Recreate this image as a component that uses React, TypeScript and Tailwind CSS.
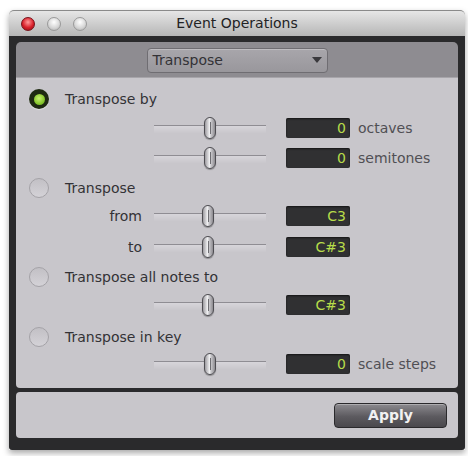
import React from "react";

const font = { fontFamily: '"DejaVu Sans", "Liberation Sans", sans-serif' };

function Radio({ on }: { on?: boolean }) {
  if (on) {
    return (
      <div className="w-[20px] h-[20px] rounded-full bg-[#1f2a12] flex items-center justify-center shadow-[0_1px_1px_rgba(255,255,255,0.5)]">
        <div className="w-[11px] h-[11px] rounded-full bg-[radial-gradient(circle_at_45%_40%,#c8f070,#86c72c_60%,#5c9a1a)]" />
      </div>
    );
  }
  return (
    <div className="w-[20px] h-[20px] rounded-full border border-[#a4a2a7] bg-[linear-gradient(#c2c0c5,#d4d2d7)]" />
  );
}

function Slider({ pos = 50 }: { pos?: number }) {
  return (
    <div className="relative w-[112px] h-[20px]">
      <div className="absolute left-0 right-0 top-[7px] h-[1px] bg-[#8f8d93]" />
      <div className="absolute left-0 right-0 top-[8px] h-[8px] bg-[linear-gradient(#d7d5da,#c7c5ca)]" />
      <div
        className="absolute top-[-1px] w-[12px] h-[22px] rounded-[6px] border border-[#4e4d52] bg-[linear-gradient(90deg,#9e9ca1,#efeff1_45%,#c9c8cc_60%,#8d8b90)] flex justify-center shadow-[0_1px_1px_rgba(0,0,0,0.3)]"
        style={{ left: pos }}
      >
        <div className="mt-[4px] w-[1px] h-[12px] bg-[#6e6d72]" />
      </div>
    </div>
  );
}

function Field({ value }: { value: string }) {
  return (
    <div className="w-[64px] h-[20px] rounded-[2px] bg-[#303032] shadow-[inset_0_1px_2px_rgba(0,0,0,0.6)] text-right pr-[4px] text-[14px] leading-[20px] text-[#b7dc4a]">
      {value}
    </div>
  );
}

function SliderRow({
  label,
  value,
  unit,
  pos,
  mt,
}: {
  label?: string;
  value: string;
  unit?: string;
  pos?: number;
  mt: string;
}) {
  return (
    <div className={`flex items-center h-[20px] ${mt}`}>
      <div className="w-[126px] text-right text-[14px] text-[#333236]">{label}</div>
      <div className="ml-[12px]">
        <Slider pos={pos} />
      </div>
      <div className="ml-[20px]">
        <Field value={value} />
      </div>
      {unit && <div className="ml-[8px] text-[14px] text-[#504f54]">{unit}</div>}
    </div>
  );
}

function RadioRow({ on, label, mt }: { on?: boolean; label: string; mt: string }) {
  return (
    <div className={`flex items-center h-[20px] ${mt}`}>
      <div className="ml-[13px]">
        <Radio on={on} />
      </div>
      <div className="ml-[16px] text-[14px] text-[#333236]">{label}</div>
    </div>
  );
}

export default function App() {
  return (
    <div className="w-[468px] h-[456px] bg-white pt-[10px] pl-[9px]" style={font}>
      <div className="w-[456px] shadow-[0_3px_6px_rgba(0,0,0,0.35)] rounded-t-[5px]">
        {/* title bar */}
        <div className="h-[26px] rounded-t-[5px] border-t border-[#8a8a8a] bg-[linear-gradient(#e6e6e6,#c9c9c9_60%,#b6b6b6)] flex items-center relative">
          <div className="absolute left-[12px] top-[6px] flex gap-[12px]">
            <div className="w-[14px] h-[14px] rounded-full bg-[radial-gradient(circle_at_50%_35%,#ff9a9a,#d9202a_55%,#8a0d14)] border border-[#7a1018]" />
            <div className="w-[14px] h-[14px] rounded-full bg-[radial-gradient(circle_at_50%_35%,#ffffff,#d4d4d4_60%,#a8a8a8)] border border-[#9a9a9a]" />
            <div className="w-[14px] h-[14px] rounded-full bg-[radial-gradient(circle_at_50%_35%,#ffffff,#d4d4d4_60%,#a8a8a8)] border border-[#9a9a9a]" />
          </div>
          <div className="flex-1 text-center text-[14px] text-[#222224]">Event Operations</div>
        </div>
        {/* frame */}
        <div className="bg-[#2a2a2c] px-[7px] pt-[6px] pb-[12px] rounded-b-[3px]">
          <div className="rounded-t-[5px] bg-[#8e8c91] h-[35px] flex justify-center pt-[6px]">
            <div className="w-[181px] h-[25px] rounded-[4px] border border-[#6f6d72] bg-[linear-gradient(#a8a6ab,#99979c)] shadow-[inset_0_1px_0_rgba(255,255,255,0.25)] flex items-center justify-between px-[5px]">
              <span className="text-[14px] text-[#333236]">Transpose</span>
              <svg width="10" height="7" viewBox="0 0 10 7">
                <path d="M0 0 L10 0 L5 6 Z" fill="#3a393d" />
              </svg>
            </div>
          </div>
          {/* main panel */}
          <div className="bg-[#c8c6cb] h-[311px] rounded-b-[4px] pt-[11px] border-t border-[#a7a5aa]">
            <RadioRow on label="Transpose by" mt="mt-0" />
            <SliderRow value="0" unit="octaves" pos={50} mt="mt-[9px]" />
            <SliderRow value="0" unit="semitones" pos={50} mt="mt-[10px]" />
            <RadioRow label="Transpose" mt="mt-[10px]" />
            <SliderRow label="from" value="C3" pos={48} mt="mt-[8px]" />
            <SliderRow label="to" value="C#3" pos={48} mt="mt-[11px]" />
            <RadioRow label="Transpose all notes to" mt="mt-[10px]" />
            <SliderRow value="C#3" pos={48} mt="mt-[8px]" />
            <RadioRow label="Transpose in key" mt="mt-[12px]" />
            <SliderRow value="0" unit="scale steps" pos={50} mt="mt-[7px]" />
          </div>
          <div className="h-[4px]" />
          <div className="bg-[#c8c6cb] h-[46px] rounded-[4px] flex items-center justify-end pr-[11px]">
            <div className="w-[113px] h-[25px] rounded-[4px] border border-[#2a292c] bg-[linear-gradient(#8c8a8f,#5c5a5f_55%,#4a484d)] shadow-[inset_0_1px_0_rgba(255,255,255,0.3)] flex items-center justify-center text-[14px] font-bold text-[#f2f2f2]">
              Apply
            </div>
          </div>
        </div>
      </div>
    </div>
  );
}
